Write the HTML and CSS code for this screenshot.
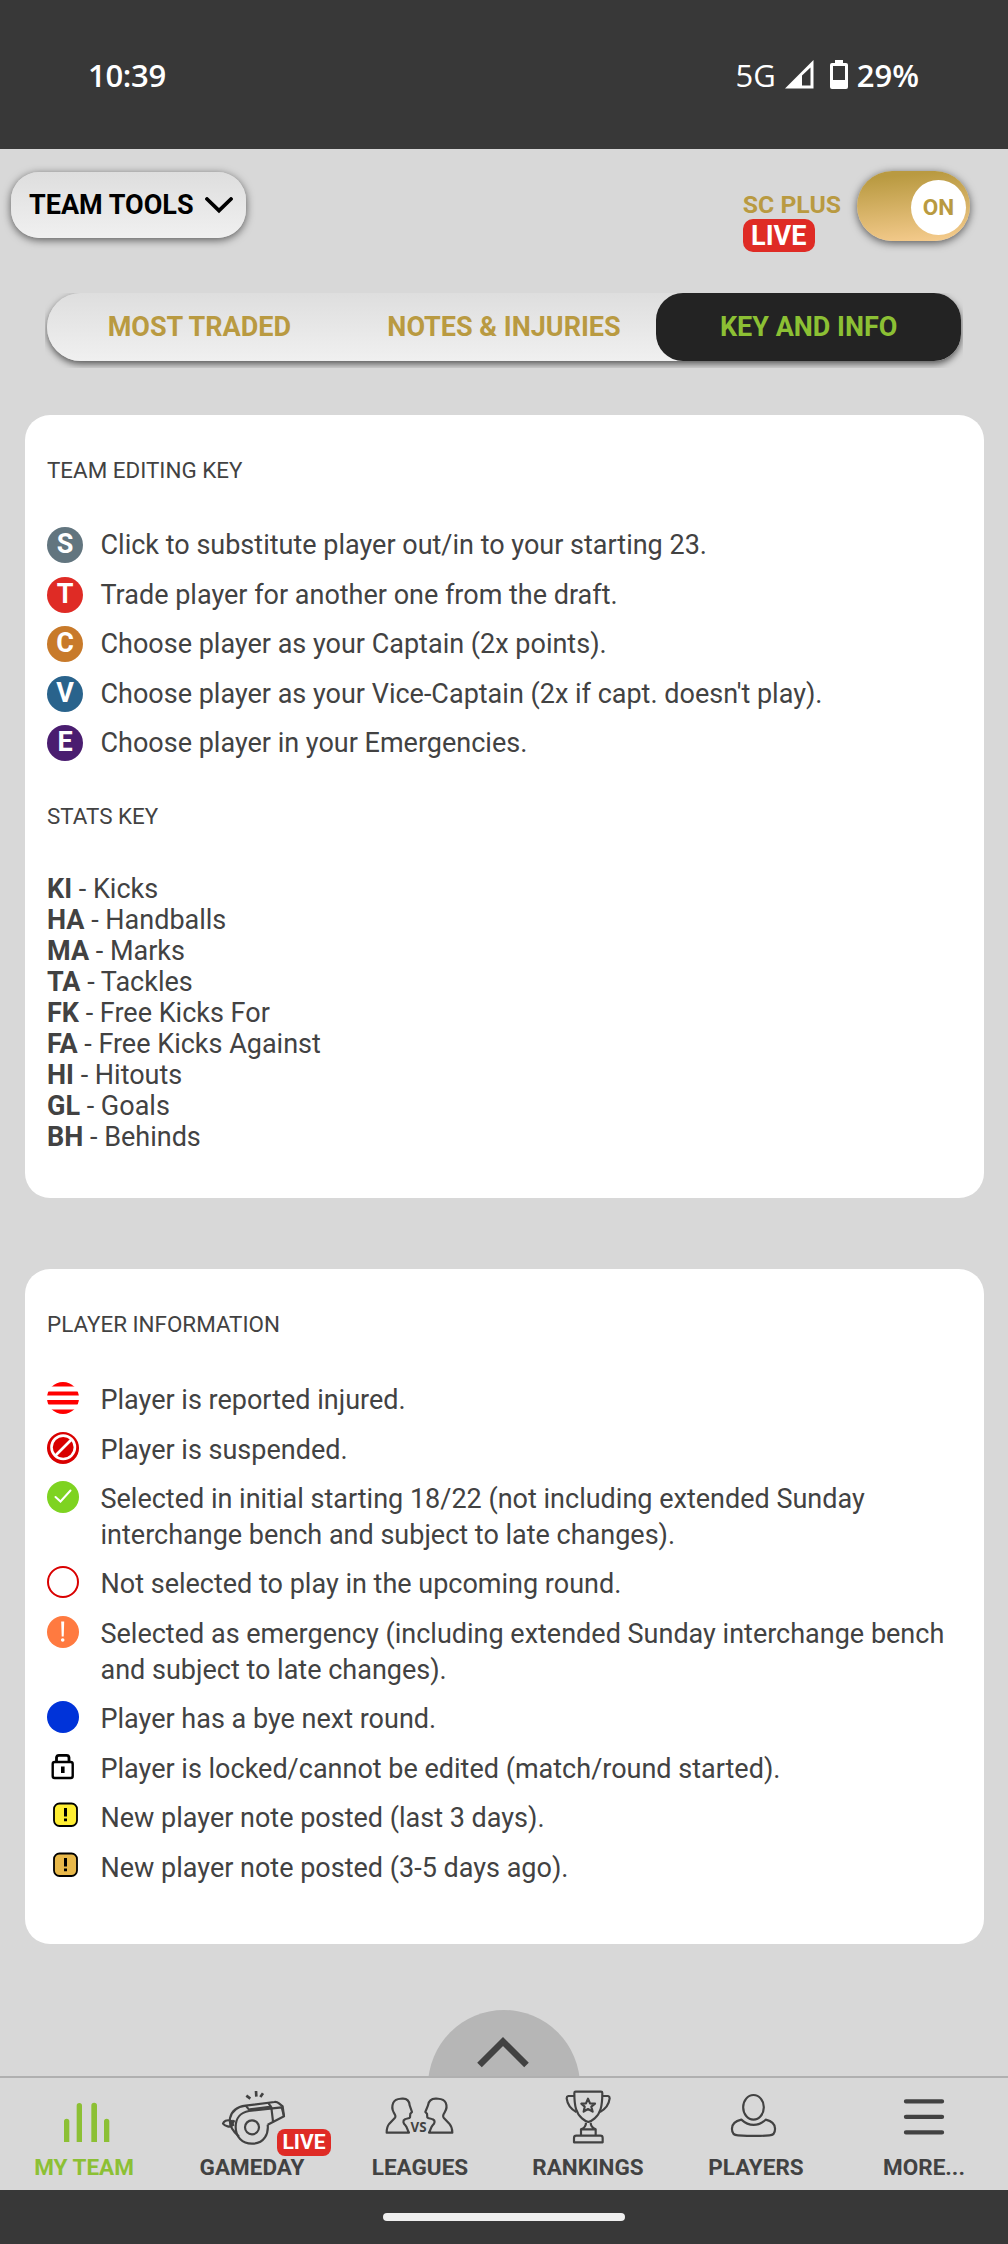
FILE: index.html
```html
<!DOCTYPE html>
<html lang="en">
<head>
<meta charset="utf-8">
<title>Key and Info</title>
<link rel="stylesheet" href="styles.css">
</head>
<body>
<div class="status-bar">
  <span class="clock">10:39</span>
  <div class="status-right">
    <span class="network">5G</span>
    <svg class="signal" width="29" height="29" viewBox="0 0 29 29"><path fill="#fff" fill-rule="evenodd" d="M28.5 0V28.5H0ZM25.5 7.5 17 15.5V25.5H25.500Z"/></svg>
    <svg class="battery" width="18" height="29" viewBox="0 0 18 29"><path fill="#fff" fill-rule="evenodd" d="M5 0h8v3h3a2 2 0 0 1 2 2v22a2 2 0 0 1-2 2H2a2 2 0 0 1-2-2V5a2 2 0 0 1 2-2h3ZM3 6v14h12V6Z"/></svg>
    <span class="percent">29%</span>
  </div>
</div>

<header class="toolbar">
  <button class="team-tools">
    <span>TEAM TOOLS</span>
    <svg width="28" height="17" viewBox="0 0 28 17"><path d="M2 2 14 13.500 26 2" fill="none" stroke="#000" stroke-width="3.800" stroke-linecap="round"/></svg>
  </button>
  <div class="plus">
    <div class="plus-label"><span class="plus-name">SC PLUS</span><span class="live">LIVE</span></div>
    <div class="toggle"><span class="knob">ON</span></div>
  </div>
</header>

<div class="tabs-clip">
  <nav class="tabs">
    <a class="tab">MOST TRADED</a>
    <a class="tab">NOTES &amp; INJURIES</a>
    <a class="tab active">KEY AND INFO</a>
  </nav>
</div>

<main>
  <section class="card editing">
    <h2>TEAM EDITING KEY</h2>
    <ul class="rows">
      <li><span class="letter sub">S</span><p>Click to substitute player out/in to your starting 23.</p></li>
      <li><span class="letter trade">T</span><p>Trade player for another one from the draft.</p></li>
      <li><span class="letter captain">C</span><p>Choose player as your Captain (2x points).</p></li>
      <li><span class="letter vice">V</span><p>Choose player as your Vice-Captain (2x if capt. doesn't play).</p></li>
      <li><span class="letter emergency">E</span><p>Choose player in your Emergencies.</p></li>
    </ul>
    <h2>STATS KEY</h2>
    <ul class="stats">
      <li><b>KI</b> - Kicks</li>
      <li><b>HA</b> - Handballs</li>
      <li><b>MA</b> - Marks</li>
      <li><b>TA</b> - Tackles</li>
      <li><b>FK</b> - Free Kicks For</li>
      <li><b>FA</b> - Free Kicks Against</li>
      <li><b>HI</b> - Hitouts</li>
      <li><b>GL</b> - Goals</li>
      <li><b>BH</b> - Behinds</li>
    </ul>
  </section>

  <section class="card info">
    <h2>PLAYER INFORMATION</h2>
    <ul class="rows">
      <li><svg class="icon" viewBox="0 0 32 32"><clipPath id="disc"><circle cx="16" cy="16" r="16"/></clipPath><path clip-path="url(#disc)" fill="#f00" d="M0 0h32v4.500H0zM0 9.500h32v4H0zM0 18h32v4.500H0zM0 27.500h32v5H0z"/></svg><p>Player is reported injured.</p></li>
      <li><svg class="icon" viewBox="0 0 32 32"><circle cx="16" cy="16" r="16" fill="#d90000"/><circle cx="16.200" cy="15.300" r="11.700" fill="none" stroke="#fff" stroke-width="2.600"/><path d="M8.500 23.500 24.500 7.500" stroke="#fff" stroke-width="2.600"/></svg><p>Player is suspended.</p></li>
      <li><svg class="icon" viewBox="0 0 32 32"><circle cx="16" cy="16" r="16" fill="#7ed321"/><path d="M8.500 16 13.500 20.500 23.500 9.500" fill="none" stroke="#fff" stroke-width="2" stroke-linecap="round"/></svg><p>Selected in initial starting 18/22 (not including extended Sunday interchange bench and subject to late changes).</p></li>
      <li><svg class="icon" viewBox="0 0 32 32"><circle cx="16" cy="16" r="15" fill="#fff" stroke="#d90000" stroke-width="2"/></svg><p>Not selected to play in the upcoming round.</p></li>
      <li><svg class="icon" viewBox="0 0 32 32"><circle cx="16" cy="16" r="16" fill="#ff7a40"/><path d="M14.200 5.500h3L16.700 20.500h-2z" fill="#fff"/><circle cx="15.700" cy="24" r="1.800" fill="#fff"/></svg><p>Selected as emergency (including extended Sunday interchange bench and subject to late changes).</p></li>
      <li><svg class="icon" viewBox="0 0 32 32"><circle cx="16" cy="16" r="16" fill="#0033d9"/></svg><p>Player has a bye next round.</p></li>
      <li><svg class="icon" viewBox="0 0 32 32"><path d="M9.500 12V6.500a2.500 2.500 0 0 1 2.500-2.200h7.500a2.500 2.500 0 0 1 2.500 2.200V12" fill="none" stroke="#000" stroke-width="2.800"/><rect x="5.700" y="11" width="20" height="16" rx="2" fill="#fff" stroke="#000" stroke-width="2.400"/><path d="M14 15.500h3.600v6.500H14z"/></svg><p>Player is locked/cannot be edited (match/round started).</p></li>
      <li><svg class="icon" viewBox="0 0 32 32"><rect x="7" y="3.500" width="23" height="22.500" rx="5.500" fill="#ffee33" stroke="#000" stroke-width="1.800"/><path d="M17 8h3v8.500h-3zM17 18.500h3v2.800h-3z"/></svg><p>New player note posted (last 3 days).</p></li>
      <li><svg class="icon" viewBox="0 0 32 32"><rect x="7" y="3.500" width="23" height="22.500" rx="5.500" fill="#e8b84a" stroke="#000" stroke-width="1.800"/><path d="M17 8h3v8.500h-3zM17 18.500h3v2.800h-3z"/></svg><p>New player note posted (3-5 days ago).</p></li>
    </ul>
  </section>
</main>

<div class="drawer">
  <div class="handle"><svg width="54" height="32" viewBox="0 0 54 32"><path d="M2.500 29 26 5.500 49.500 29" fill="none" stroke="#424242" stroke-width="6.500"/></svg></div>
</div>
<nav class="bottom-nav">
  <a class="item active">
    <svg viewBox="0 285 504 210"><g fill="#8cc034"><path d="M192 456V394a8 8 0 0 1 16 0V456zM230 456V347a8 8 0 0 1 16 0V456zM274 456V347a8.500 8.500 0 0 1 17 0V456zM312 456V394a8 8 0 0 1 16 0V456z"/></g></svg>
    <span>MY TEAM</span>
  </a>
  <a class="item">
    <svg viewBox="504 285 504 210"><g class="line">
      <circle cx="756" cy="412" r="21"/>
      <path d="M803 404C806 430 794 461 756 461C726 461 707 440 707 411C707 385 722 367 747 363L845 352L852 379L803 404"/>
      <path d="M717 440C694 420 687 402 690 385C695 362 713 350 737 347L823 336C829 335 833 337 837 340L848 349L852 379"/>
      <path d="M737 347 749 361M805 339 814 352 819 394M749 358 815 350"/>
      <path d="M692 392C680 388 671 394 669 401C676 410 690 412 696 407ZM698 393 690 410M703 391 694 408M700 408 695 390"/>
      <path class="thick" d="M739 317 751 326M768 303 769 320M789 310 781 321"/>
    </g></svg>
    <span>GAMEDAY</span>
    <em class="live small">LIVE</em>
  </a>
  <a class="item">
    <svg viewBox="1008 285 504 210"><g class="line">
      <path d="M1227 428H1160C1160 415 1162 408 1168 401L1185 383C1189 378 1185 373 1181 367C1176 358 1176 347 1180 338C1186 325 1196 327 1207 326C1223 325 1228 334 1229 346L1236 366 1231 371 1230 382C1227 387 1220 384 1215 388C1207 392 1210 400 1216 406C1222 412 1222 420 1227 428Z"/>
      <path d="M1287 428H1357C1357 415 1354 408 1348 401L1331 383C1327 378 1330 373 1334 367C1340 358 1341 347 1337 338C1331 325 1320 327 1309 326C1293 325 1286 334 1284 346L1276 366 1281 371 1282 382C1285 387 1292 384 1298 388C1307 392 1304 400 1298 406C1292 412 1292 420 1287 428Z"/>
      </g><text x="1255.500" y="426" class="versus">VS</text></svg>
    <span>LEAGUES</span>
  </a>
  <a class="item">
    <svg viewBox="0 285 504 210"><g class="line">
      <path d="M211 309Q211 305 215 305H291Q295 305 295 309C295 350 289 371 272 385Q263 393 253 396Q243 393 234 385C217 371 211 350 211 309Z"/>
      <path d="M211 318H193Q188 319 188 325C190 342 201 357 217 366M295 318H312Q317 319 317 325C315 342 304 357 288 366"/>
      <path d="M246 398C246 408 241 414 231 418V436M260 398C260 408 266 414 275 418V436M231 418H276M210 457V444Q210 437 217 437H289Q296 437 296 444V457Z"/>
      <path d="M252 326 258 340 273 341 262 350 266 365 252 357 239 365 242 350 232 341 246 340Z"/>
    </g></svg>
    <span>RANKINGS</span>
  </a>
  <a class="item">
    <svg viewBox="504 285 504 210"><g class="line">
      <ellipse cx="748.500" cy="352" rx="31" ry="37"/>
      <path d="M712 389C735 410 763 410 785 389C806 394 814 403 813 418C813 430 806 436 796 436C765 439 735 438 702 436C690 436 684 430 684 418C683 403 690 394 712 389Z"/>
    </g></svg>
    <span>PLAYERS</span>
  </a>
  <a class="item">
    <svg viewBox="1008 285 504 210"><path d="M1206 334H1314M1206 380.500H1314M1206 427H1314" stroke="#424242" stroke-width="13" stroke-linecap="round"/></svg>
    <span>MORE...</span>
  </a>
</nav>
<div class="gesture-bar"><i></i></div>
</body>
</html>
```

FILE: styles.css
```css
* { box-sizing: border-box; }
body {
  margin: 0;
  width: 1008px;
  height: 2244px;
  display: flex;
  flex-direction: column;
  background: #d8d8d8;
  color: #424242;
  font-family: Roboto, sans-serif;
  font-size: 27px;
  overflow: hidden;
}
h2, p, ul { margin: 0; padding: 0; font-weight: 400; }
ul { list-style: none; }

.status-bar {
  height: 149px;
  padding: 0 89px 0 88px;
  display: flex;
  justify-content: space-between;
  align-items: center;
  background: #383838;
  color: #fff;
  font-family: "Open Sans", sans-serif;
  font-size: 31px;
}
.clock { font-weight: 600; letter-spacing: -.3px; }
.status-right { display: flex; align-items: center; }
.network { font-weight: 500; margin-right: 9px; }
.signal { margin-right: 16px; }
.battery { margin-right: 9px; }
.percent { font-weight: 600; }

.toolbar {
  height: 144px;
  padding: 22px 38px 0 11px;
  display: flex;
  justify-content: space-between;
  align-items: flex-start;
}
.team-tools {
  width: 235px;
  height: 66px;
  margin-top: 1px;
  padding: 0 13px 0 18px;
  display: flex;
  justify-content: space-between;
  align-items: center;
  border: 0;
  border-radius: 28px;
  background: linear-gradient(#dedede, #f0f0f0);
  box-shadow: 0 2px 8px rgba(0, 0, 0, .6);
  color: #000;
  font: 700 27px Roboto, sans-serif;
}
.plus { display: flex; gap: 16px; }
.plus-label {
  display: flex;
  flex-direction: column;
  align-items: flex-start;
  padding-top: 20px;
}
.plus-name {
  color: #b99a41;
  font-size: 24.8px;
  font-weight: 700;
  line-height: 28px;
}
.live {
  width: 72px;
  height: 33px;
  border-radius: 10px;
  background: #df2b25;
  color: #fff;
  font-size: 27px;
  font-weight: 700;
  font-style: normal;
  line-height: 34px;
  text-align: center;
}
.toggle {
  width: 113px;
  height: 70px;
  padding: 9px 4px;
  display: flex;
  justify-content: flex-end;
  border-radius: 35px;
  background: linear-gradient(175deg, #b99a41 10%, #f7cd90);
  box-shadow: 0 2px 9px rgba(0, 0, 0, .6);
}
.knob {
  width: 55px;
  height: 55px;
  border-radius: 50%;
  background: #fff;
  color: #b99a41;
  font-size: 22.5px;
  font-weight: 700;
  line-height: 55px;
  text-align: center;
}

.tabs-clip {
  height: 75px;
  margin: 0 45px;
  padding: 0 2px;
  overflow: hidden;
}
.tabs {
  height: 68px;
  display: flex;
  border-radius: 34px 27px 27px 34px;
  background: linear-gradient(#dedede, #f0f0f0);
  box-shadow: 0 3px 7px rgba(0, 0, 0, .6);
}
.tab {
  flex: 1;
  color: #b99a41;
  font-weight: 700;
  line-height: 68px;
  text-align: center;
  white-space: nowrap;
}
.tab.active { background: #232323; color: #8cc034; border-radius: 27px; }

main { padding: 47px 24px 0 25px; }
.card { padding: 42px 22px 0; border-radius: 25px; background: #fff; }
.card h2 { font-size: 22.4px; line-height: 27px; }
.editing { height: 783px; margin-bottom: 71px; }
.info { height: 675px; }
.rows { margin-top: 43px; }
.info .rows { margin-top: 44px; }
.rows li {
  display: grid;
  grid-template-columns: 53.5px 1fr;
  align-items: start;
  margin-bottom: 14px;
  line-height: 35.6px;
}
.rows p { margin: 1px 0 -1px; }
.letter {
  width: 36px;
  height: 36px;
  margin-bottom: -1px;
  border-radius: 50%;
  color: #fff;
  font-weight: 700;
  line-height: 35px;
  text-align: center;
}
.sub { background: #62757f; }
.trade { background: #df2b25; }
.captain { background: #c87a2a; }
.vice { background: #29638c; }
.emergency { background: #4a1d70; }
.icon { width: 32px; height: 32px; display: block; }
.editing .rows + h2 { margin-top: 42px; }
.stats { margin-top: 44px; line-height: 31px; }

.drawer {
  margin-top: auto;
  height: 66px;
  display: flex;
  justify-content: center;
  overflow: hidden;
}
.handle {
  flex: none;
  width: 152px;
  height: 152px;
  padding-top: 26px;
  border-radius: 50%;
  background: #b6b6b6;
  text-align: center;
}
.bottom-nav {
  height: 114px;
  display: grid;
  grid-template-columns: repeat(6, 1fr);
  border-top: 2px solid #b0b0b0;
}
.item {
  position: relative;
  padding-top: 7px;
  display: flex;
  flex-direction: column;
  align-items: center;
  font-size: 22.5px;
  font-weight: 700;
  line-height: 25px;
}
.item svg { width: 168px; height: 70px; display: block; }
.item.active { color: #8cc034; }
.line { fill: none; stroke: #424242; stroke-width: 6.5; stroke-linejoin: round; }
.thick { stroke-width: 8; }
.versus {
  fill: #424242;
  font: 700 40px "Open Sans", sans-serif;
  text-anchor: middle;
}
.live.small {
  position: absolute;
  left: 109px;
  top: 51px;
  width: 54px;
  height: 27px;
  border-radius: 8px;
  font-size: 21px;
  line-height: 27px;
}
.gesture-bar {
  height: 54px;
  padding-top: 23px;
  display: flex;
  justify-content: center;
  background: #383838;
}
.gesture-bar i {
  width: 242px;
  height: 8px;
  border-radius: 4px;
  background: #efefef;
}
```
